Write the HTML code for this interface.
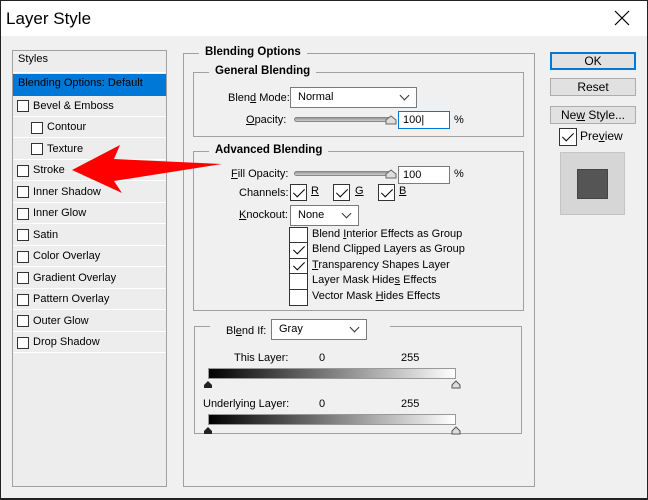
<!DOCTYPE html><html><head><style>
*{margin:0;padding:0;box-sizing:border-box}
body{width:648px;height:500px;background:#f0f0f0;font-family:"Liberation Sans",sans-serif;font-size:11px;color:#000;position:relative;overflow:hidden}
.a{position:absolute;white-space:nowrap}
.frame{position:absolute;left:0;top:0;width:648px;height:500px;border:1px solid #222;border-bottom-width:2px;pointer-events:none}
.title{position:absolute;left:0;top:0;width:648px;height:36px;background:#fff}
.cb{position:absolute;width:12px;height:12px;border:1px solid #333;background:#fff}
.row{position:absolute;left:13px;width:153px;height:21px;border-bottom:1px solid #fff}
.grp{position:absolute;border:1px solid #a0a0a0}
.lab{position:absolute;background:#f0f0f0;padding:0 6px;font-weight:bold;font-size:11.5px}
.sel{position:absolute;background:#fff;border:1px solid #7a7a7a;height:21px;padding:3px 7px}
.sel:after{content:"";position:absolute;right:8px;top:4px;width:6px;height:6px;border-right:1px solid #333;border-bottom:1px solid #333;transform:rotate(45deg)}
.inp{position:absolute;background:#fff;border:1px solid #7a7a7a;height:18px;padding:2px 4px}
.sl{position:absolute;height:5px;border-radius:3px;background:linear-gradient(#999,#ccc);border:1px solid #888}
.big{position:absolute;width:17px;height:17px;border:1px solid #333;background:#fff}
.big:after,.ck:after{content:"";position:absolute;left:5px;top:1px;width:5px;height:10px;border-right:1.5px solid #000;border-bottom:1.5px solid #000;transform:rotate(45deg)}
.bx{position:absolute;left:289px;width:19px;height:17px;border:1px solid #333;background:#fff}
.ck:after{left:6px;top:0px}
.btn{position:absolute;left:550px;width:86px;height:18px;background:#e1e1e1;border:1px solid #adadad;text-align:center;font-size:12px;line-height:16px}
.grad{position:absolute;left:209px;width:248px;height:11px;border:1px solid #999;background:linear-gradient(90deg,#000,#fff)}
u{text-decoration:underline}
</style></head><body>
<div class="title"></div>
<div class="a" style="left:6px;top:9px;font-size:17px">Layer Style</div>
<svg class="a" style="left:614px;top:10px" width="16" height="16"><path d="M1 1L15 15M15 1L1 15" stroke="#000" stroke-width="1.2"/></svg>

<div class="a" style="left:12px;top:50px;width:155px;height:437px;border:1px solid #a0a0a0;background:#ededed"></div>
<div class="row" style="top:51px;height:22px"></div>
<div class="a" style="left:18px;top:53px">Styles</div>
<div class="a" style="left:13px;top:74px;width:153px;height:22px;background:#0078d7"></div>
<div class="a" style="left:18px;top:77px;color:#000">Blending Options: Default</div>
<div class="row" style="top:96px"></div><div class="cb" style="left:17px;top:100px"></div><div class="a" style="left:33px;top:100px">Bevel &amp; Emboss</div>
<div class="row" style="top:117px"></div><div class="cb" style="left:31px;top:122px"></div><div class="a" style="left:47px;top:121px">Contour</div>
<div class="row" style="top:139px"></div><div class="cb" style="left:31px;top:143px"></div><div class="a" style="left:47px;top:143px">Texture</div>
<div class="row" style="top:160px"></div><div class="cb" style="left:17px;top:165px"></div><div class="a" style="left:33px;top:164px">Stroke</div>
<div class="row" style="top:182px"></div><div class="cb" style="left:17px;top:186px"></div><div class="a" style="left:33px;top:186px">Inner Shadow</div>
<div class="row" style="top:203px"></div><div class="cb" style="left:17px;top:208px"></div><div class="a" style="left:33px;top:207px">Inner Glow</div>
<div class="row" style="top:225px"></div><div class="cb" style="left:17px;top:229px"></div><div class="a" style="left:33px;top:229px">Satin</div>
<div class="row" style="top:246px"></div><div class="cb" style="left:17px;top:251px"></div><div class="a" style="left:33px;top:250px">Color Overlay</div>
<div class="row" style="top:268px"></div><div class="cb" style="left:17px;top:272px"></div><div class="a" style="left:33px;top:272px">Gradient Overlay</div>
<div class="row" style="top:289px"></div><div class="cb" style="left:17px;top:294px"></div><div class="a" style="left:33px;top:293px">Pattern Overlay</div>
<div class="row" style="top:311px"></div><div class="cb" style="left:17px;top:315px"></div><div class="a" style="left:33px;top:315px">Outer Glow</div>
<div class="row" style="top:332px"></div><div class="cb" style="left:17px;top:337px"></div><div class="a" style="left:33px;top:336px">Drop Shadow</div>

<div class="grp" style="left:183px;top:53px;width:352px;height:434px"></div>
<div class="lab" style="left:199px;top:46px">Blending Options</div>
<div class="grp" style="left:193px;top:72px;width:331px;height:65px"></div>
<div class="lab" style="left:209px;top:65px">General Blending</div>
<div class="a" style="left:228px;top:92px"><span>Blen<u>d</u> Mode:</span></div>
<div class="sel" style="left:290px;top:87px;width:127px">Normal</div>
<div class="a" style="left:246px;top:114px"><u>O</u>pacity:</div>
<div class="sl" style="left:294px;top:117px;width:100px"></div>
<svg class="a" style="left:385px;top:115px" width="12" height="10"><path d="M1 9V5L6 1L11 5V9Z" fill="#ddd" stroke="#666"/></svg>
<div class="inp" style="left:398px;top:111px;width:52px;border-color:#0078d7">100|</div>
<div class="a" style="left:454px;top:114px">%</div>

<div class="grp" style="left:193px;top:151px;width:331px;height:160px"></div>
<div class="lab" style="left:209px;top:144px">Advanced Blending</div>
<div class="a" style="left:231px;top:168px"><u>F</u>ill Opacity:</div>
<div class="sl" style="left:294px;top:171px;width:100px"></div>
<svg class="a" style="left:385px;top:169px" width="12" height="10"><path d="M1 9V5L6 1L11 5V9Z" fill="#ddd" stroke="#666"/></svg>
<div class="inp" style="left:398px;top:166px;width:52px">100</div>
<div class="a" style="left:454px;top:168px">%</div>
<div class="a" style="left:239px;top:187px">Channels:</div>
<div class="big" style="left:290px;top:184px"></div><div class="a" style="left:311px;top:185px"><u>R</u></div>
<div class="big" style="left:333px;top:184px"></div><div class="a" style="left:355px;top:185px"><u>G</u></div>
<div class="big" style="left:378px;top:184px"></div><div class="a" style="left:399px;top:185px"><u>B</u></div>
<div class="a" style="left:239px;top:209px"><u>K</u>nockout:</div>
<div class="sel" style="left:290px;top:205px;width:69px">None</div>
<div class="bx" style="left:289px;top:227px"></div><div class="a" style="left:312px;top:228px">Blend <u>I</u>nterior Effects as Group</div>
<div class="bx ck" style="left:289px;top:242px"></div><div class="a" style="left:312px;top:243px">Blend Cli<u>p</u>ped Layers as Group</div>
<div class="bx ck" style="left:289px;top:258px"></div><div class="a" style="left:312px;top:259px"><u>T</u>ransparency Shapes Layer</div>
<div class="bx" style="left:289px;top:273px"></div><div class="a" style="left:312px;top:274px">Layer Mask Hide<u>s</u> Effects</div>
<div class="bx" style="left:289px;top:289px"></div><div class="a" style="left:312px;top:290px">Vector Mask <u>H</u>ides Effects</div>

<div class="grp" style="left:194px;top:326px;width:328px;height:108px"></div>
<div class="a" style="left:210px;top:318px;width:180px;height:30px;background:#f0f0f0"></div>
<div class="a" style="left:226px;top:325px">Bl<u>e</u>nd If:</div>
<div class="sel" style="left:271px;top:319px;width:96px">Gray</div>
<div class="a" style="left:234px;top:352px">This Layer:</div>
<div class="a" style="left:319px;top:352px">0</div>
<div class="a" style="left:401px;top:352px">255</div>
<div class="grad" style="left:208px;top:368px"></div>
<svg class="a" style="left:203px;top:380px" width="10" height="9"><path d="M1 8V5L5 1L9 5V8Z" fill="#222"/></svg>
<svg class="a" style="left:451px;top:380px" width="10" height="9"><path d="M1 8V5L5 1L9 5V8Z" fill="#ddd" stroke="#555"/></svg>
<div class="a" style="left:203px;top:398px">Underlying Layer:</div>
<div class="a" style="left:319px;top:398px">0</div>
<div class="a" style="left:401px;top:398px">255</div>
<div class="grad" style="left:208px;top:414px"></div>
<svg class="a" style="left:203px;top:426px" width="10" height="9"><path d="M1 8V5L5 1L9 5V8Z" fill="#222"/></svg>
<svg class="a" style="left:451px;top:426px" width="10" height="9"><path d="M1 8V5L5 1L9 5V8Z" fill="#ddd" stroke="#555"/></svg>

<div class="btn" style="top:52px;border:2px solid #0078d7;line-height:14px">OK</div>
<div class="btn" style="top:78px">Reset</div>
<div class="btn" style="top:106px">Ne<u>w</u> Style...</div>
<div class="big" style="left:559px;top:128px;width:18px;height:18px"></div>
<div class="a" style="left:580px;top:129px;font-size:12px">Pre<u>v</u>iew</div>
<div class="a" style="left:560px;top:152px;width:65px;height:63px;background:#d6d6d6;border:1px solid #c4c4c4"></div>
<div class="a" style="left:577px;top:169px;width:31px;height:30px;background:#555;border:1px solid #444"></div>

<svg class="a" style="left:0;top:0" width="648" height="500"><polygon points="72,170 120,145 114,159 222,164 114,181 122,193" fill="#f00"/></svg>
<div class="frame"></div>
</body></html>
